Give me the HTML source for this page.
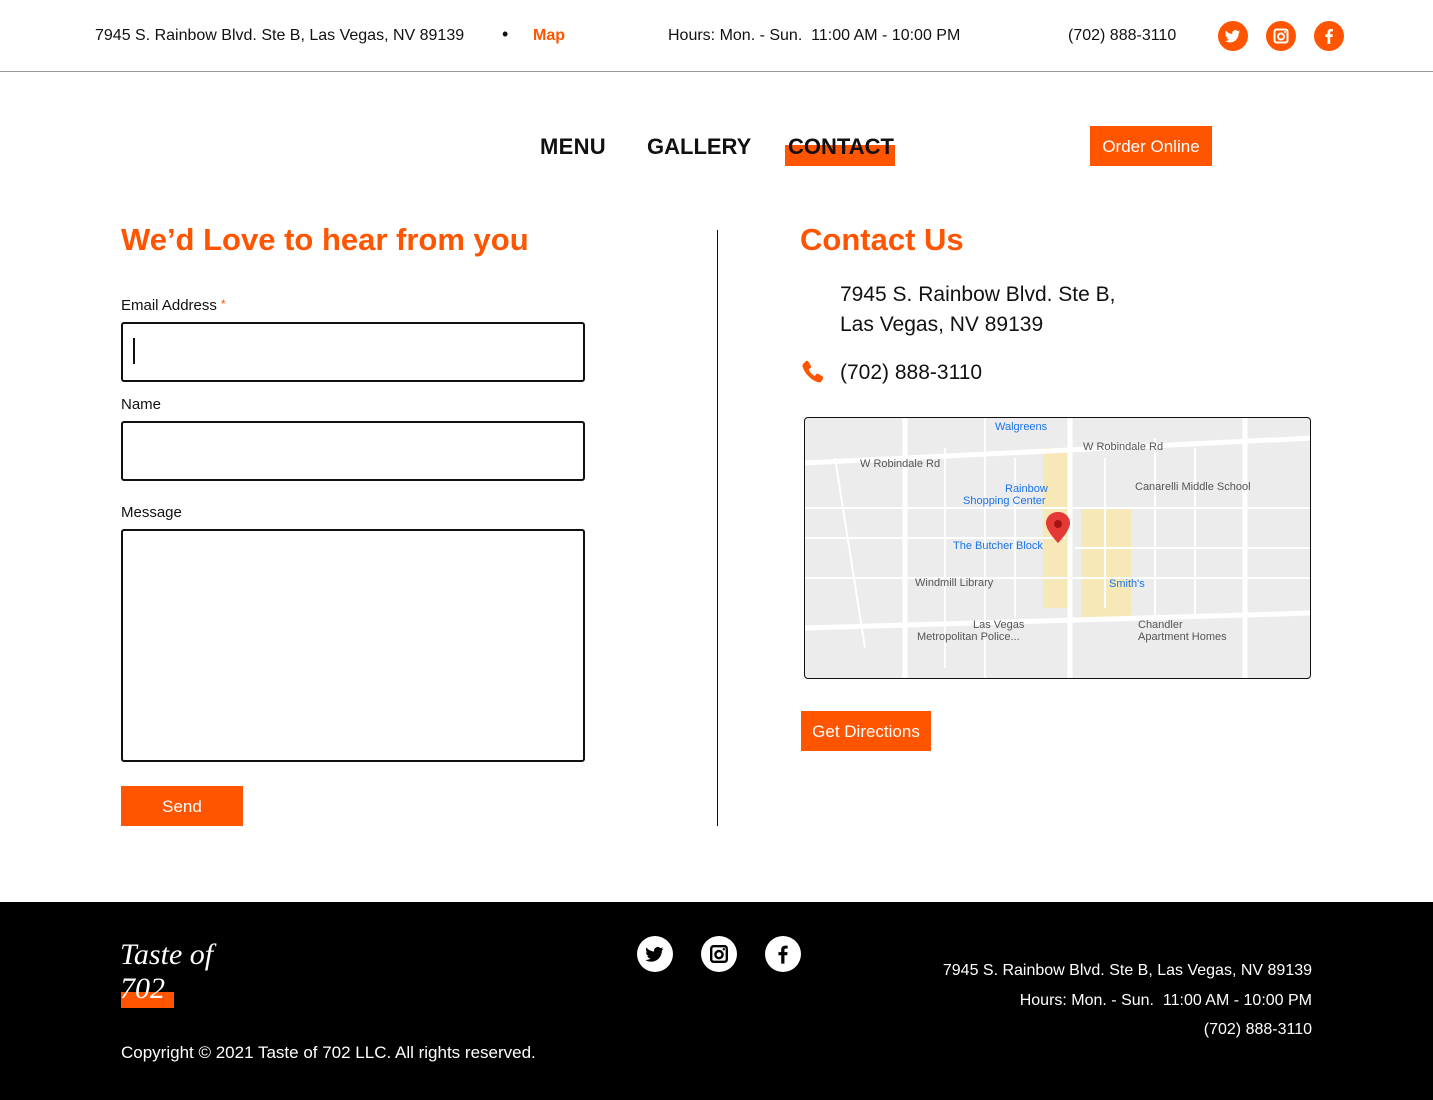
<!DOCTYPE html>
<html><head><meta charset="utf-8"><style>
*{margin:0;padding:0;box-sizing:border-box}
body{width:1433px;height:1100px;font-family:"Liberation Sans",sans-serif;background:#fff;color:#111;position:relative;overflow:hidden}
.a{position:absolute;white-space:nowrap}
.or{color:#ff5500}
.ic{position:absolute;width:30px;height:30px;border-radius:50%;background:#ff5500}
.ic svg{width:30px;height:30px}
.inp{position:absolute;border:2px solid #111;border-radius:3px;background:#fff}
.btn{position:absolute;background:#ff5500;color:#fff;font-size:17px;text-align:center}
.fi{position:absolute;width:36px;height:36px;border-radius:50%;background:#fff}
.fi svg{width:36px;height:36px}
</style></head><body>
<div class="a" style="left:95px;top:27px;font-size:16px">7945 S. Rainbow Blvd. Ste B, Las Vegas, NV 89139</div>
<div class="a" style="left:502px;top:24px;font-size:18px">•</div>
<div class="a or" style="left:533px;top:27px;font-size:16px;font-weight:bold">Map</div>
<div class="a" style="left:668px;top:27px;font-size:16px">Hours: Mon. - Sun.&nbsp; 11:00 AM - 10:00 PM</div>
<div class="a" style="left:1068px;top:27px;font-size:16px">(702) 888-3110</div>
<div class="ic" style="left:1218px;top:21px"><svg viewBox="0 0 30 30"><path d="M22 10.5c-.6.3-1.2.4-1.8.5.7-.4 1.1-1 1.4-1.7-.6.4-1.3.6-2 .8a3.1 3.1 0 0 0-5.3 2.8c-2.6-.1-4.9-1.4-6.4-3.3-.9 1.5-.4 3.3.9 4.2-.5 0-1-.2-1.4-.4 0 1.5 1.1 2.8 2.5 3.1-.5.1-1 .2-1.4.1.4 1.3 1.6 2.1 2.9 2.2A6.3 6.3 0 0 1 7 20c1.4.9 3 1.4 4.8 1.4 5.8 0 9-4.9 8.900-9.3.6-.4 1-.9 1.3-1.6z" fill="#fff"/></svg></div>
<div class="ic" style="left:1266px;top:21px"><svg viewBox="0 0 30 30"><rect x="8.5" y="8.5" width="13" height="13" rx="2" fill="none" stroke="#fff" stroke-width="2"/><circle cx="15" cy="15.5" r="3" fill="none" stroke="#fff" stroke-width="2"/><circle cx="19" cy="11" r="1" fill="#fff"/></svg></div>
<div class="ic" style="left:1314px;top:21px"><svg viewBox="0 0 30 30"><path d="M16.2 23v-7h2.3l.3-2.6h-2.6v-1.7c0-.8.2-1.3 1.3-1.3h1.4V8.1c-.3 0-1.1-.1-2-.1-2 0-3.4 1.2-3.4 3.5v1.9h-2.3V16h2.3v7z" fill="#fff"/></svg></div>
<div class="a" style="left:0;top:71px;width:1433px;height:1px;background:#999"></div>

<div class="a" style="left:540px;top:134px;font-size:22px;font-weight:bold;letter-spacing:.3px">MENU</div>
<div class="a" style="left:647px;top:134px;font-size:22px;font-weight:bold;letter-spacing:0">GALLERY</div>
<div class="a" style="left:785px;top:145px;width:110px;height:21px;background:#ff5500"></div>
<div class="a" style="left:788px;top:134px;font-size:22px;font-weight:bold;letter-spacing:0">CONTACT</div>
<div class="btn" style="left:1090px;top:126px;width:122px;height:40px;line-height:41px">Order Online</div>

<div class="a or" style="left:121px;top:222px;font-size:31px;font-weight:bold">We’d Love to hear from you</div>
<div class="a" style="left:121px;top:297px;font-size:15px">Email Address <span class="or" style="font-size:12px;vertical-align:top">*</span></div>
<div class="inp" style="left:121px;top:322px;width:464px;height:60px"><div style="position:absolute;left:10px;top:14px;width:2px;height:26px;background:#111"></div></div>
<div class="a" style="left:121px;top:396px;font-size:15px">Name</div>
<div class="inp" style="left:121px;top:421px;width:464px;height:60px"></div>
<div class="a" style="left:121px;top:504px;font-size:15px">Message</div>
<div class="inp" style="left:121px;top:529px;width:464px;height:233px"></div>
<div class="btn" style="left:121px;top:786px;width:122px;height:40px;line-height:41px">Send</div>

<div class="a" style="left:717px;top:230px;width:1px;height:596px;background:#111"></div>

<div class="a or" style="left:800px;top:222px;font-size:31px;font-weight:bold">Contact Us</div>
<div class="a" style="left:840px;top:280px;font-size:21px;line-height:30px">7945 S. Rainbow Blvd. Ste B,<br>Las Vegas, NV 89139</div>
<svg class="a" style="left:801px;top:360px" width="24" height="24" viewBox="0 0 24 24"><path d="M5 1c1-.5 2 0 2.6 1l2.2 3.6c.5 1 .2 2-.6 2.6L7.6 9.4c1 2.6 3.4 5.2 6.2 6.6l1.3-1.6c.7-.8 1.8-1 2.6-.4l3.5 2.3c1 .6 1.2 1.7.7 2.6l-1.4 2.3c-.7 1.1-2 1.5-3.2 1.1C10 20 4 14 1.6 6.6 1.2 5.4 1.7 4 2.8 3.3z" fill="#ff5500"/></svg>
<div class="a" style="left:840px;top:361px;font-size:21px">(702) 888-3110</div>

<div class="a" style="left:804px;top:417px;width:507px;height:262px;border:1px solid #111;border-radius:4px;overflow:hidden;background:#ececec">
<svg width="507" height="262" viewBox="0 0 507 262" style="font-family:'Liberation Sans',sans-serif">
<rect x="238" y="30" width="28" height="160" fill="#f7e8b8"/><rect x="276" y="90" width="50" height="110" fill="#f7e8b8"/>
<g stroke="#fff" stroke-width="5" fill="none"><path d="M0 45 L507 20"/><path d="M0 210 L507 195"/><path d="M265 0 V262"/><path d="M100 0 V262"/><path d="M440 0 V262"/></g>
<g stroke="#fff" stroke-width="2" fill="none"><path d="M0 90 H507"/><path d="M0 160 H507"/><path d="M180 0 V262"/><path d="M350 20 V200"/><path d="M30 40 L60 230"/><path d="M140 30 V250"/><path d="M390 30 V200"/><path d="M300 40 V190"/><path d="M210 40 V200"/><path d="M0 120 H260"/><path d="M270 130 H507"/></g>
<g font-size="11" fill="#555"><text x="55" y="49">W Robindale Rd</text><text x="278" y="32">W Robindale Rd</text><text x="110" y="168">Windmill Library</text><text x="112" y="222">Metropolitan Police...</text><text x="168" y="210">Las Vegas</text><text x="330" y="72">Canarelli Middle School</text><text x="333" y="210">Chandler</text><text x="333" y="222">Apartment Homes</text></g>
<g font-size="11" fill="#1a73e8"><text x="190" y="12">Walgreens</text><text x="200" y="74">Rainbow</text><text x="158" y="86">Shopping Center</text><text x="148" y="131">The Butcher Block</text><text x="304" y="169">Smith's</text></g>
<path d="M253 94c-7 0-12 5-12 11 0 8 12 20 12 20s12-12 12-20c0-6-5-11-12-11z" fill="#e53935"/><circle cx="253" cy="106" r="4" fill="#a31515"/>
</svg></div>
<div class="btn" style="left:801px;top:711px;width:130px;height:40px;line-height:41px">Get Directions</div>

<div class="a" style="left:0;top:902px;width:1433px;height:198px;background:#000"></div>
<div class="a" style="left:121px;top:992px;width:53px;height:16px;background:#ff5500"></div>
<div class="a" style="left:120px;top:938px;font-size:30px;color:#fff;font-family:'Liberation Serif',serif;font-style:italic;line-height:34px">Taste of<br>702</div>
<div class="fi" style="left:637px;top:936px"><svg viewBox="0 0 30 30"><path d="M22 10.5c-.6.3-1.2.4-1.8.5.7-.4 1.1-1 1.4-1.7-.6.4-1.3.6-2 .8a3.1 3.1 0 0 0-5.3 2.8c-2.6-.1-4.9-1.4-6.4-3.3-.9 1.5-.4 3.3.9 4.2-.5 0-1-.2-1.4-.4 0 1.5 1.1 2.8 2.5 3.1-.5.1-1 .2-1.4.1.4 1.3 1.6 2.1 2.9 2.2A6.3 6.3 0 0 1 7 20c1.4.9 3 1.4 4.8 1.4 5.8 0 9-4.9 8.9-9.3.6-.4 1-.9 1.3-1.6z" fill="#000"/></svg></div>
<div class="fi" style="left:701px;top:936px"><svg viewBox="0 0 30 30"><rect x="8.5" y="8.5" width="13" height="13" rx="2" fill="none" stroke="#000" stroke-width="2"/><circle cx="15" cy="15.5" r="3" fill="none" stroke="#000" stroke-width="2"/><circle cx="19" cy="11" r="1" fill="#000"/></svg></div>
<div class="fi" style="left:765px;top:936px"><svg viewBox="0 0 30 30"><path d="M16.2 23v-7h2.3l.3-2.6h-2.6v-1.7c0-.8.2-1.3 1.3-1.3h1.4V8.1c-.3 0-1.1-.1-2-.1-2 0-3.4 1.2-3.4 3.5v1.9h-2.3V16h2.3v7z" fill="#000"/></svg></div>
<div class="a" style="right:121px;top:956px;font-size:16px;color:#fff;text-align:right;line-height:29.5px">7945 S. Rainbow Blvd. Ste B, Las Vegas, NV 89139<br>Hours: Mon. - Sun.&nbsp; 11:00 AM - 10:00 PM<br>(702) 888-3110</div>
<div class="a" style="left:121px;top:1043px;font-size:17px;color:#fff">Copyright © 2021 Taste of 702 LLC. All rights reserved.</div>
</body></html>
